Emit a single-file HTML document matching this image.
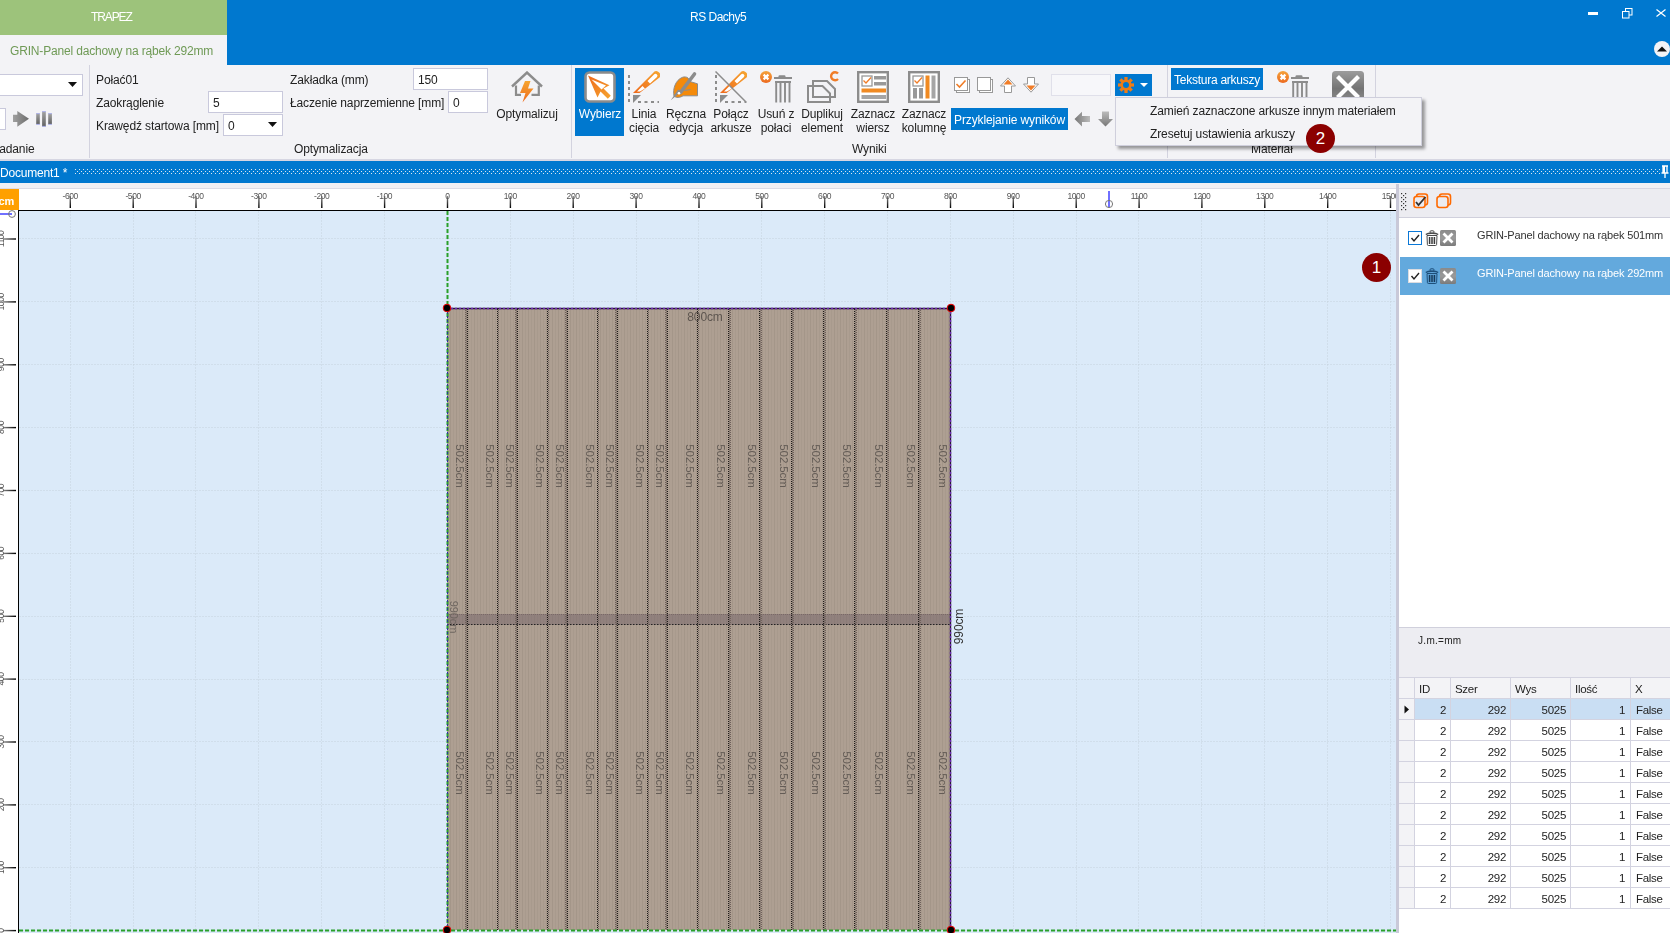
<!DOCTYPE html>
<html><head><meta charset="utf-8">
<style>
*{margin:0;padding:0;box-sizing:border-box}
html,body{width:1670px;height:933px;overflow:hidden;background:#f3f3f6;font-family:"Liberation Sans",sans-serif;font-size:12px;color:#222;letter-spacing:-0.12px}
.a{position:absolute}
.t{position:absolute;white-space:nowrap;line-height:1}
#title{left:0;top:0;width:1670px;height:65px;background:#0078cf}
#tab1{left:0;top:0;width:227px;height:35px;background:#9dc37b}
#tab2{left:0;top:35px;width:227px;height:30px;background:#f3f3f6}
#ribbon{left:0;top:65px;width:1670px;height:94px;background:#f3f3f6}
#rbb{left:0;top:159px;width:1670px;height:2px;background:#d6d6e2}
#doc{left:0;top:161px;width:1670px;height:22px;background:#0078cf}
#gap{left:0;top:183px;width:1670px;height:6px;background:#f0f0f4}
#rulerT{left:19px;top:189px;width:1377px;height:21px;background:#fff}
#rulerL{left:0;top:210px;width:18px;height:723px;background:#fff}
#cm{left:0;top:189px;width:19px;height:21px;background:#ffa000}
#canvas{left:18px;top:210px;width:1378px;height:723px;background:#dbeaf9;border-left:1px solid #000;border-top:2px solid #000;overflow:hidden}
#split{left:1396px;top:183px;width:3px;height:750px;background:#c8c8d6}
.box{background:#fff;border:1px solid #c9c9dc}
.c{transform:translateX(-50%)}
.badge{width:29px;height:29px;border-radius:50%;background:#8b0000;color:#fff;font-size:17px;line-height:29px;text-align:center}
#rp{left:1399px;top:188px;width:271px;height:745px;background:#fff}
.t{will-change:transform}
svg{will-change:transform}
</style></head><body>
<div id="title" class="a"></div>
<div id="tab1" class="a"></div>
<div id="tab2" class="a"></div>
<div class="t" style="left:91px;top:11px;color:#fff;font-size:12px;letter-spacing:-1.1px">TRAPEZ</div>
<div class="t" style="left:10px;top:45px;color:#6f9a56;font-size:12px;letter-spacing:-0.17px">GRIN-Panel dachowy na rąbek 292mm</div>
<div class="t" style="left:690px;top:11px;color:#fff;font-size:12px;letter-spacing:-0.5px">RS Dachy5</div>
<div class="a" style="left:1588px;top:12px;width:10px;height:3px;background:#fff"></div><svg class="a" style="left:1622px;top:8px" width="11" height="11"><rect x="3.5" y="0.5" width="6.5" height="6.5" fill="none" stroke="#fff" stroke-width="1"/><rect x="0.5" y="3.5" width="6.5" height="6.5" fill="#0078cf" stroke="#fff" stroke-width="1"/></svg><svg class="a" style="left:1656px;top:9px" width="10" height="8"><path d="M0.5 0.5L9.5 7.5M9.5 0.5L0.5 7.5" stroke="#fff" stroke-width="1.2"/></svg><div class="a" style="left:1654px;top:41px;width:16px;height:16px;border-radius:50%;background:#f3f3f6"></div><svg class="a" style="left:1656px;top:45px" width="12" height="8"><path d="M1 6.5H11L6 1.5Z" fill="#111"/></svg>
<div id="ribbon" class="a"></div>
<div id="rbb" class="a"></div>
<!-- ribbon content -->
<div class="a" style="left:89px;top:65px;width:1px;height:93px;background:#d3d3df"></div>
<div class="a" style="left:571px;top:65px;width:1px;height:93px;background:#d3d3df"></div>
<div class="a" style="left:1167px;top:65px;width:1px;height:93px;background:#d3d3df"></div>
<div class="a" style="left:1375px;top:65px;width:1px;height:93px;background:#d3d3df"></div>
<!-- Zadanie group -->
<div class="a box" style="left:-2px;top:74px;width:85px;height:22px"></div>
<svg class="a" style="left:68px;top:82px" width="10" height="6"><path d="M0 0H9L4.5 5Z" fill="#111"/></svg>
<div class="a box" style="left:-2px;top:108px;width:8px;height:22px"></div>
<svg class="a" style="left:12px;top:110px" width="18" height="18"><defs><linearGradient id="ga" x1="0" y1="0" x2="1" y2="0"><stop offset="0" stop-color="#a0a0a0"/><stop offset="1" stop-color="#6c6c6c"/></linearGradient></defs><path d="M1 4.8H5.3V1L17 8.8L5.3 16.8V12.1H1Z" fill="url(#ga)"/></svg>
<svg class="a" style="left:35px;top:110px" width="18" height="18"><defs><linearGradient id="gbar" x1="0" y1="0" x2="0" y2="1"><stop offset="0" stop-color="#a4a4a4"/><stop offset="1" stop-color="#626262"/></linearGradient></defs>
<rect x="1.2" y="3.3" width="3.6" height="11" fill="url(#gbar)"/><rect x="7.1" y="1.3" width="3.7" height="15.2" fill="url(#gbar)"/><rect x="13.2" y="3.3" width="3.7" height="11" fill="url(#gbar)"/>
<rect x="1.2" y="3.3" width="3.6" height="0.8" fill="#a8aef8"/><rect x="7.1" y="1.3" width="3.7" height="0.8" fill="#a8aef8"/><rect x="13.2" y="3.3" width="3.7" height="0.8" fill="#a8aef8"/>
<rect x="1.2" y="13.9" width="3.6" height="0.8" fill="#a8aef8"/><rect x="7.1" y="15.9" width="3.7" height="0.8" fill="#a8aef8"/><rect x="13.2" y="13.9" width="3.7" height="0.8" fill="#a8aef8"/></svg>
<div class="t" style="left:-8px;top:143px">Zadanie</div>
<!-- Optymalizacja group -->
<div class="t" style="left:96px;top:74px">Połać01</div>
<div class="t" style="left:96px;top:97px">Zaokrąglenie</div>
<div class="t" style="left:96px;top:120px">Krawędź startowa [mm]</div>
<div class="a box" style="left:208px;top:91px;width:75px;height:22px"></div>
<div class="t" style="left:213px;top:97px">5</div>
<div class="a box" style="left:223px;top:114px;width:60px;height:22px"></div>
<div class="t" style="left:228px;top:120px">0</div>
<svg class="a" style="left:268px;top:122px" width="10" height="6"><path d="M0 0H9L4.5 5Z" fill="#111"/></svg>
<div class="t" style="left:290px;top:74px">Zakładka (mm)</div>
<div class="t" style="left:290px;top:97px">Łaczenie naprzemienne [mm]</div>
<div class="a box" style="left:413px;top:68px;width:75px;height:22px"></div>
<div class="t" style="left:418px;top:74px">150</div>
<div class="a box" style="left:448px;top:91px;width:40px;height:22px"></div>
<div class="t" style="left:453px;top:97px">0</div>
<svg class="a" style="left:511px;top:71px" width="32" height="32"><defs><linearGradient id="gb" x1="0" y1="0" x2="0" y2="1"><stop offset="0" stop-color="#f6a530"/><stop offset="1" stop-color="#ee6a1c"/></linearGradient></defs>
<path d="M1 15.5L16 1.5L31 15.5" fill="none" stroke="#8c8c8c" stroke-width="2.4"/>
<path d="M5 14.5V23.8H10M20.5 23.8H27.8V14.5" fill="none" stroke="#8c8c8c" stroke-width="2.2"/>
<path d="M14 10H19.5L17 17.5H22.5L11.5 31.5L14.5 22H9Z" fill="url(#gb)"/></svg>
<div class="t c" style="left:527px;top:108px">Optymalizuj</div>
<div class="t" style="left:294px;top:143px">Optymalizacja</div>
<!-- Wyniki group -->
<div class="a" style="left:575px;top:68px;width:49px;height:68px;background:#0078cf"></div>
<svg class="a" style="left:584px;top:71px" width="32" height="32"><defs><linearGradient id="gc" x1="0" y1="0" x2="1" y2="1"><stop offset="0" stop-color="#ee6a1c"/><stop offset="1" stop-color="#f6a530"/></linearGradient></defs>
<rect x="1.5" y="1.5" width="29" height="29" rx="4" fill="#fff" stroke="#8c8c8c" stroke-width="2.6"/>
<path d="M4 4.5L25.5 14.2L19.5 17.5L26.8 24.8L23.8 27.8L16.5 20.5L13.5 26.5Z" fill="url(#gc)"/>
<path d="M7.5 8.5L22 14.5L17.5 18.5Z" fill="#fff"/></svg>
<div class="t c" style="left:600px;top:108px;color:#fff">Wybierz</div>
<!-- Linia -->
<svg class="a" style="left:628px;top:71px" width="32" height="32"><defs><linearGradient id="gd" x1="0" y1="1" x2="1" y2="0"><stop offset="0" stop-color="#ee6a1c"/><stop offset="1" stop-color="#f6a530"/></linearGradient></defs>
<path d="M1 4V32" stroke="#8c8c8c" stroke-width="2" stroke-dasharray="3 3"/>
<path d="M10 31H31" stroke="#8c8c8c" stroke-width="2" stroke-dasharray="3 3.5"/>
<path d="M5 24H13L5 32Z" fill="#8c8c8c"/>
<path d="M5 22L25 2A3 3 0 0 1 31.5 6.5L11.5 22Z" fill="url(#gd)"/>
<path d="M9 20.5L14.5 15L17 17.5L12 20.5Z M19.5 10L26 3.6A1.5 1.5 0 0 1 29 6L22 12.5Z" fill="#fff"/></svg>
<div class="t c" style="left:644px;top:108px">Linia</div>
<div class="t c" style="left:644px;top:122px">cięcia</div>
<!-- Reczna -->
<svg class="a" style="left:670px;top:71px" width="32" height="32">
<path d="M4 25C2.5 18 5.5 9 12.5 6.3C14.5 5.6 16.5 5.8 18 7L20 10L21.5 11L27.5 12.8V24.8H13C10 26.8 6 27 4 25Z" fill="#f48a0a" stroke="#8c8c8c" stroke-width="1"/>
<path d="M24.5 3L10.5 21.5" stroke="#8c8c8c" stroke-width="3.6" stroke-linecap="round"/>
<path d="M12 20L0.8 29.2L8 18.5Z" fill="#8c8c8c"/>
<circle cx="9" cy="22.3" r="1.3" fill="#fff"/>
<path d="M14.5 19.5L20.5 18.5" stroke="#8c8c8c" stroke-width="1" fill="none"/></svg>
<div class="t c" style="left:686px;top:108px">Ręczna</div>
<div class="t c" style="left:686px;top:122px">edycja</div>
<!-- Polacz -->
<svg class="a" style="left:715px;top:71px" width="32" height="32">
<path d="M1 4V32" stroke="#8c8c8c" stroke-width="2" stroke-dasharray="3 3"/>
<path d="M10 31H31" stroke="#8c8c8c" stroke-width="2" stroke-dasharray="3 3.5"/>
<path d="M5 24H13L5 32Z" fill="#8c8c8c"/>
<path d="M5 22L25 2A3 3 0 0 1 31.5 6.5L11.5 22Z" fill="url(#gd)"/>
<path d="M9 20.5L14.5 15L17 17.5L12 20.5Z M19.5 10L26 3.6A1.5 1.5 0 0 1 29 6L22 12.5Z" fill="#fff"/>
<path d="M0.5 0.5L31.5 31.5" stroke="#8c8c8c" stroke-width="1.5"/></svg>
<div class="t c" style="left:731px;top:108px">Połącz</div>
<div class="t c" style="left:731px;top:122px">arkusze</div>
<!-- Usun -->
<svg class="a" style="left:760px;top:71px" width="34" height="32">
<defs><linearGradient id="go" x1="0" y1="0" x2="0" y2="1"><stop offset="0" stop-color="#f5a23a"/><stop offset="1" stop-color="#ec6a20"/></linearGradient></defs>
<circle cx="6" cy="6" r="6" fill="url(#go)"/>
<path d="M3.6 3.6L8.4 8.4M8.4 3.6L3.6 8.4" stroke="#fff" stroke-width="2.2"/>
<rect x="14" y="6" width="18" height="2" fill="#8c8c8c"/><rect x="18.5" y="4.2" width="7" height="2.5" rx="1.2" fill="#8c8c8c"/>
<rect x="15" y="10" width="16" height="2" fill="#8c8c8c"/>
<path d="M16.2 12V31.5M20.5 12V31.5M25 12V31.5M29.5 12V31.5" stroke="#8c8c8c" stroke-width="1.9"/></svg>
<div class="t c" style="left:776px;top:108px">Usuń z</div>
<div class="t c" style="left:776px;top:122px">połaci</div>
<!-- Duplikuj -->
<svg class="a" style="left:807px;top:71px" width="34" height="32">
<path d="M6 10H20L28 18V26H6Z" fill="none" stroke="#8c8c8c" stroke-width="2"/>
<path d="M1 15H15.5L23 22.5V31H1Z" fill="none" stroke="#8c8c8c" stroke-width="2"/>
<path d="M31 2.5A4 4 0 1 0 31 8" fill="none" stroke="#f07d28" stroke-width="2.4"/></svg>
<div class="t c" style="left:822px;top:108px">Duplikuj</div>
<div class="t c" style="left:822px;top:122px">element</div>
<!-- Zaznacz wiersz -->
<svg class="a" style="left:857px;top:71px" width="32" height="32">
<rect x="1.2" y="1.2" width="29.6" height="29.6" fill="#fff" stroke="#8c8c8c" stroke-width="2.4"/>
<rect x="5" y="5" width="10" height="10" fill="#fff" stroke="#999" stroke-width="1.3"/>
<path d="M6.5 9.5L9 12L14 6.5" fill="none" stroke="#f07d28" stroke-width="1.3"/>
<rect x="17" y="5" width="12" height="3.5" fill="#999"/><rect x="17" y="11" width="12" height="3.5" fill="#999"/>
<rect x="4.5" y="17.5" width="24.5" height="4" fill="#f08a22"/>
<rect x="4.5" y="24" width="24.5" height="4" fill="#a5a5a5"/></svg>
<div class="t c" style="left:873px;top:108px">Zaznacz</div>
<div class="t c" style="left:873px;top:122px">wiersz</div>
<!-- Zaznacz kolumne -->
<svg class="a" style="left:908px;top:71px" width="32" height="32">
<rect x="1.2" y="1.2" width="29.6" height="29.6" fill="#fff" stroke="#8c8c8c" stroke-width="2.4"/>
<rect x="5" y="5" width="10" height="10" fill="#fff" stroke="#999" stroke-width="1.3"/>
<path d="M6.5 9.5L9 12L14 6.5" fill="none" stroke="#f07d28" stroke-width="1.3"/>
<rect x="5" y="17" width="4" height="10.5" fill="#999"/><rect x="11" y="17" width="4" height="10.5" fill="#999"/>
<rect x="17.5" y="4.5" width="4" height="23" fill="#f08a22"/>
<rect x="23.5" y="4.5" width="4" height="23" fill="#a5a5a5"/></svg>
<div class="t c" style="left:924px;top:108px">Zaznacz</div>
<div class="t c" style="left:924px;top:122px">kolumnę</div>
<!-- small icons -->
<svg class="a" style="left:953px;top:76px" width="18" height="18">
<rect x="3.5" y="3.5" width="13" height="13" fill="#fff" stroke="#999" stroke-width="1"/>
<rect x="1.5" y="1.5" width="13" height="13" fill="#fff" stroke="#999" stroke-width="1"/>
<path d="M3.5 8L6.5 11L12.5 4.5" fill="none" stroke="#f07d28" stroke-width="1.6"/></svg>
<svg class="a" style="left:976px;top:76px" width="18" height="18">
<rect x="3.5" y="3.5" width="13" height="13" fill="#fff" stroke="#999" stroke-width="1"/>
<rect x="1.5" y="1.5" width="13" height="13" fill="#fff" stroke="#999" stroke-width="1"/></svg>
<svg class="a" style="left:1000px;top:77px" width="17" height="16">
<path d="M8 0.8L15.5 9H11.5V15.5H4.5V9H0.5Z" fill="#fff" stroke="#999" stroke-width="1"/>
<path d="M8 2.5L12.5 7.5H3.5Z" fill="#f07d28"/></svg>
<svg class="a" style="left:1023px;top:77px" width="17" height="16">
<path d="M8 15.2L15.5 7H11.5V0.5H4.5V7H0.5Z" fill="#fff" stroke="#999" stroke-width="1"/>
<path d="M8 13.5L12.5 8.5H3.5Z" fill="#f07d28"/></svg>
<div class="a" style="left:1051px;top:74px;width:60px;height:22px;background:#f7f7fa;border:1px solid #e0e0ea"></div>
<div class="a" style="left:1115px;top:74px;width:37px;height:22px;background:#0078cf"></div>
<svg class="a" style="left:1117px;top:76px" width="18" height="18">
<g transform="translate(9 9)" fill="#f07d16">
<circle r="5.5"/>
<rect x="-1.6" y="-8" width="3.2" height="16"/><rect x="-8" y="-1.6" width="16" height="3.2"/>
<rect x="-1.6" y="-8" width="3.2" height="16" transform="rotate(45)"/><rect x="-1.6" y="-8" width="3.2" height="16" transform="rotate(-45)"/>
</g><circle cx="9" cy="9" r="3" fill="#0078cf"/></svg>
<svg class="a" style="left:1140px;top:83px" width="10" height="6"><path d="M0 0H8L4 4Z" fill="#fff"/></svg>
<div class="a" style="left:951px;top:108px;width:117px;height:22px;background:#0078cf"></div>
<div class="t" style="left:954px;top:114px;color:#fff">Przyklejanie wyników</div>
<svg class="a" style="left:1074px;top:111px" width="17" height="16"><defs><linearGradient id="ge" x1="0" y1="0" x2="1" y2="0"><stop offset="0" stop-color="#777"/><stop offset="1" stop-color="#bbb"/></linearGradient><linearGradient id="gf" x1="0" y1="0" x2="0" y2="1"><stop offset="0" stop-color="#bbb"/><stop offset="1" stop-color="#777"/></linearGradient></defs><path d="M0.5 8L8 0.8V5H16V11H8V15.5Z" fill="url(#ge)"/></svg>
<svg class="a" style="left:1097px;top:111px" width="17" height="16"><path d="M8.5 15.5L16 8H12V0.5H5V8H1Z" fill="url(#gf)"/></svg>
<div class="t" style="left:852px;top:143px">Wyniki</div>
<!-- Material group -->
<div class="a" style="left:1171px;top:68px;width:92px;height:22px;background:#0078cf"></div>
<div class="t" style="left:1174px;top:74px;color:#fff;letter-spacing:-0.25px">Tekstura arkuszy</div>
<svg class="a" style="left:1277px;top:71px" width="34" height="32">
<defs><linearGradient id="go" x1="0" y1="0" x2="0" y2="1"><stop offset="0" stop-color="#f5a23a"/><stop offset="1" stop-color="#ec6a20"/></linearGradient></defs>
<circle cx="6" cy="6" r="6" fill="url(#go)"/>
<path d="M3.6 3.6L8.4 8.4M8.4 3.6L3.6 8.4" stroke="#fff" stroke-width="2.2"/>
<rect x="14" y="6" width="18" height="2" fill="#8c8c8c"/><rect x="18.5" y="4.2" width="7" height="2.5" rx="1.2" fill="#8c8c8c"/>
<rect x="15" y="10" width="16" height="2" fill="#8c8c8c"/>
<path d="M16.2 12V31.5M20.5 12V31.5M25 12V31.5M29.5 12V31.5" stroke="#8c8c8c" stroke-width="1.9"/></svg>
<svg class="a" style="left:1332px;top:71px" width="32" height="32"><defs><linearGradient id="gg" x1="0" y1="0" x2="0" y2="1"><stop offset="0" stop-color="#9c9c9c"/><stop offset="0.55" stop-color="#747474"/><stop offset="1" stop-color="#8e8e8e"/></linearGradient></defs>
<rect x="0" y="0" width="32" height="32" rx="3.5" fill="url(#gg)"/>
<path d="M5.5 5.5L26.5 26.5M26.5 5.5L5.5 26.5" stroke="#fff" stroke-width="4.2"/></svg>
<div class="t" style="left:1251px;top:143px">Materiał</div>
<!-- dropdown menu -->
<div class="a" style="left:1115px;top:97px;width:307px;height:49px;background:#f3f3f6;border:1px solid #cfcfdc;box-shadow:3px 3px 3px rgba(0,0,0,.38)"></div>
<div class="t" style="left:1150px;top:105px">Zamień zaznaczone arkusze innym materiałem</div>
<div class="t" style="left:1150px;top:128px">Zresetuj ustawienia arkuszy</div>
<div class="a badge" style="left:1306px;top:124px">2</div>

<div id="doc" class="a"></div>
<div class="t" style="left:0;top:167px;color:#fff;font-size:12px;letter-spacing:-0.2px">Document1 *</div><svg class="a" style="left:75px;top:169px" width="1585" height="5"><defs><pattern id="dp" width="4" height="4" patternUnits="userSpaceOnUse"><rect x="0" y="0" width="1" height="1" fill="#dde6f0"/><rect x="2" y="2" width="1" height="1" fill="#dde6f0"/></pattern></defs><rect width="1585" height="5" fill="url(#dp)"/></svg><svg class="a" style="left:1660px;top:165px" width="10" height="14"><path d="M2 1H8M3 1V8M7 1V8M1.5 8H8.5M5 8V13" fill="none" stroke="#fff" stroke-width="1.3"/><rect x="3" y="1" width="2" height="7" fill="#fff"/></svg>
<svg class="a" style="left:0;top:183px" width="1396" height="750" viewBox="0 183 1396 750">
<defs><pattern id="stripe" x="0" y="0" width="6" height="10" patternUnits="userSpaceOnUse"><rect width="6" height="10" fill="#ae9f92"/><rect x="0" width="1" height="10" fill="#a49689"/><rect x="3" width="1" height="10" fill="#a89a8d"/></pattern><linearGradient id="tick" x1="0" y1="0" x2="0" y2="1"><stop offset="0" stop-color="#888"/><stop offset="1" stop-color="#000"/></linearGradient><linearGradient id="tickL" x1="0" y1="0" x2="1" y2="0"><stop offset="0" stop-color="#888"/><stop offset="1" stop-color="#000"/></linearGradient></defs>
<rect x="0" y="183" width="1396" height="5" fill="#f0f0f4"/>
<rect x="0" y="188" width="1396" height="1" fill="#dcdce6"/>
<rect x="19" y="189" width="1377" height="21" fill="#fff"/>
<rect x="0" y="189" width="19" height="21" fill="#ffa000"/>
<text x="-1.5" y="204.8" font-size="11" font-weight="bold" fill="#fff" font-family="Liberation Sans">cm</text>
<rect x="0" y="210" width="18" height="723" fill="#fff"/>
<rect x="19" y="211" width="1377" height="722" fill="#dbeaf9"/>
<rect x="18" y="210" width="1378" height="1" fill="#000"/>
<rect x="18" y="210" width="1" height="723" fill="#000"/>
<path d="M70.5 211V933M133.5 211V933M195.5 211V933M258.5 211V933M321.5 211V933M384.5 211V933M447.5 211V933M510.5 211V933M573.5 211V933M636.5 211V933M698.5 211V933M761.5 211V933M824.5 211V933M887.5 211V933M950.5 211V933M1013.5 211V933M1076.5 211V933M1138.5 211V933M1201.5 211V933M1264.5 211V933M1327.5 211V933M1390.5 211V933M19 930.5H1396M19 867.5H1396M19 804.5H1396M19 741.5H1396M19 679.5H1396M19 616.5H1396M19 553.5H1396M19 490.5H1396M19 427.5H1396M19 364.5H1396M19 301.5H1396M19 238.5H1396" stroke="#c0ccd8" stroke-opacity="0.42" stroke-width="1" stroke-dasharray="2 1" fill="none"/>
<rect x="69.6" y="196" width="1.4" height="12" fill="url(#tick)"/>
<text x="70.2" y="199" font-size="8.5" fill="#555" text-anchor="middle" font-family="Liberation Sans" letter-spacing="-0.4">-600</text>
<rect x="132.5" y="196" width="1.4" height="12" fill="url(#tick)"/>
<text x="133.1" y="199" font-size="8.5" fill="#555" text-anchor="middle" font-family="Liberation Sans" letter-spacing="-0.4">-500</text>
<rect x="195.3" y="196" width="1.4" height="12" fill="url(#tick)"/>
<text x="195.9" y="199" font-size="8.5" fill="#555" text-anchor="middle" font-family="Liberation Sans" letter-spacing="-0.4">-400</text>
<rect x="258.2" y="196" width="1.4" height="12" fill="url(#tick)"/>
<text x="258.8" y="199" font-size="8.5" fill="#555" text-anchor="middle" font-family="Liberation Sans" letter-spacing="-0.4">-300</text>
<rect x="321.1" y="196" width="1.4" height="12" fill="url(#tick)"/>
<text x="321.7" y="199" font-size="8.5" fill="#555" text-anchor="middle" font-family="Liberation Sans" letter-spacing="-0.4">-200</text>
<rect x="383.9" y="196" width="1.4" height="12" fill="url(#tick)"/>
<text x="384.5" y="199" font-size="8.5" fill="#555" text-anchor="middle" font-family="Liberation Sans" letter-spacing="-0.4">-100</text>
<rect x="446.8" y="196" width="1.4" height="12" fill="url(#tick)"/>
<text x="447.4" y="199" font-size="8.5" fill="#555" text-anchor="middle" font-family="Liberation Sans" letter-spacing="-0.4">0</text>
<rect x="509.7" y="196" width="1.4" height="12" fill="url(#tick)"/>
<text x="510.3" y="199" font-size="8.5" fill="#555" text-anchor="middle" font-family="Liberation Sans" letter-spacing="-0.4">100</text>
<rect x="572.5" y="196" width="1.4" height="12" fill="url(#tick)"/>
<text x="573.1" y="199" font-size="8.5" fill="#555" text-anchor="middle" font-family="Liberation Sans" letter-spacing="-0.4">200</text>
<rect x="635.4" y="196" width="1.4" height="12" fill="url(#tick)"/>
<text x="636.0" y="199" font-size="8.5" fill="#555" text-anchor="middle" font-family="Liberation Sans" letter-spacing="-0.4">300</text>
<rect x="698.3" y="196" width="1.4" height="12" fill="url(#tick)"/>
<text x="698.9" y="199" font-size="8.5" fill="#555" text-anchor="middle" font-family="Liberation Sans" letter-spacing="-0.4">400</text>
<rect x="761.1" y="196" width="1.4" height="12" fill="url(#tick)"/>
<text x="761.8" y="199" font-size="8.5" fill="#555" text-anchor="middle" font-family="Liberation Sans" letter-spacing="-0.4">500</text>
<rect x="824.0" y="196" width="1.4" height="12" fill="url(#tick)"/>
<text x="824.6" y="199" font-size="8.5" fill="#555" text-anchor="middle" font-family="Liberation Sans" letter-spacing="-0.4">600</text>
<rect x="886.9" y="196" width="1.4" height="12" fill="url(#tick)"/>
<text x="887.5" y="199" font-size="8.5" fill="#555" text-anchor="middle" font-family="Liberation Sans" letter-spacing="-0.4">700</text>
<rect x="949.8" y="196" width="1.4" height="12" fill="url(#tick)"/>
<text x="950.4" y="199" font-size="8.5" fill="#555" text-anchor="middle" font-family="Liberation Sans" letter-spacing="-0.4">800</text>
<rect x="1012.6" y="196" width="1.4" height="12" fill="url(#tick)"/>
<text x="1013.2" y="199" font-size="8.5" fill="#555" text-anchor="middle" font-family="Liberation Sans" letter-spacing="-0.4">900</text>
<rect x="1075.5" y="196" width="1.4" height="12" fill="url(#tick)"/>
<text x="1076.1" y="199" font-size="8.5" fill="#555" text-anchor="middle" font-family="Liberation Sans" letter-spacing="-0.4">1000</text>
<rect x="1138.4" y="196" width="1.4" height="12" fill="url(#tick)"/>
<text x="1139.0" y="199" font-size="8.5" fill="#555" text-anchor="middle" font-family="Liberation Sans" letter-spacing="-0.4">1100</text>
<rect x="1201.2" y="196" width="1.4" height="12" fill="url(#tick)"/>
<text x="1201.8" y="199" font-size="8.5" fill="#555" text-anchor="middle" font-family="Liberation Sans" letter-spacing="-0.4">1200</text>
<rect x="1264.1" y="196" width="1.4" height="12" fill="url(#tick)"/>
<text x="1264.7" y="199" font-size="8.5" fill="#555" text-anchor="middle" font-family="Liberation Sans" letter-spacing="-0.4">1300</text>
<rect x="1327.0" y="196" width="1.4" height="12" fill="url(#tick)"/>
<text x="1327.6" y="199" font-size="8.5" fill="#555" text-anchor="middle" font-family="Liberation Sans" letter-spacing="-0.4">1400</text>
<rect x="1389.8" y="196" width="1.4" height="12" fill="url(#tick)"/>
<text x="1390.4" y="199" font-size="8.5" fill="#555" text-anchor="middle" font-family="Liberation Sans" letter-spacing="-0.4">1500</text>
<rect x="1108" y="191" width="2" height="16" fill="#7070ff"/><circle cx="1109" cy="204" r="3.6" fill="none" stroke="#777" stroke-width="1"/>
<rect x="3" y="929.9" width="13" height="1.4" fill="url(#tickL)"/>
<text transform="translate(4 930.5) rotate(-90)" font-size="8.5" fill="#555" text-anchor="middle" font-family="Liberation Sans" letter-spacing="-0.4">0</text>
<rect x="3" y="867.0" width="13" height="1.4" fill="url(#tickL)"/>
<text transform="translate(4 867.6) rotate(-90)" font-size="8.5" fill="#555" text-anchor="middle" font-family="Liberation Sans" letter-spacing="-0.4">100</text>
<rect x="3" y="804.2" width="13" height="1.4" fill="url(#tickL)"/>
<text transform="translate(4 804.8) rotate(-90)" font-size="8.5" fill="#555" text-anchor="middle" font-family="Liberation Sans" letter-spacing="-0.4">200</text>
<rect x="3" y="741.3" width="13" height="1.4" fill="url(#tickL)"/>
<text transform="translate(4 741.9) rotate(-90)" font-size="8.5" fill="#555" text-anchor="middle" font-family="Liberation Sans" letter-spacing="-0.4">300</text>
<rect x="3" y="678.4" width="13" height="1.4" fill="url(#tickL)"/>
<text transform="translate(4 679.0) rotate(-90)" font-size="8.5" fill="#555" text-anchor="middle" font-family="Liberation Sans" letter-spacing="-0.4">400</text>
<rect x="3" y="615.6" width="13" height="1.4" fill="url(#tickL)"/>
<text transform="translate(4 616.2) rotate(-90)" font-size="8.5" fill="#555" text-anchor="middle" font-family="Liberation Sans" letter-spacing="-0.4">500</text>
<rect x="3" y="552.7" width="13" height="1.4" fill="url(#tickL)"/>
<text transform="translate(4 553.3) rotate(-90)" font-size="8.5" fill="#555" text-anchor="middle" font-family="Liberation Sans" letter-spacing="-0.4">600</text>
<rect x="3" y="489.8" width="13" height="1.4" fill="url(#tickL)"/>
<text transform="translate(4 490.4) rotate(-90)" font-size="8.5" fill="#555" text-anchor="middle" font-family="Liberation Sans" letter-spacing="-0.4">700</text>
<rect x="3" y="426.9" width="13" height="1.4" fill="url(#tickL)"/>
<text transform="translate(4 427.5) rotate(-90)" font-size="8.5" fill="#555" text-anchor="middle" font-family="Liberation Sans" letter-spacing="-0.4">800</text>
<rect x="3" y="364.1" width="13" height="1.4" fill="url(#tickL)"/>
<text transform="translate(4 364.7) rotate(-90)" font-size="8.5" fill="#555" text-anchor="middle" font-family="Liberation Sans" letter-spacing="-0.4">900</text>
<rect x="3" y="301.2" width="13" height="1.4" fill="url(#tickL)"/>
<text transform="translate(4 301.8) rotate(-90)" font-size="8.5" fill="#555" text-anchor="middle" font-family="Liberation Sans" letter-spacing="-0.4">1000</text>
<rect x="3" y="238.3" width="13" height="1.4" fill="url(#tickL)"/>
<text transform="translate(4 238.9) rotate(-90)" font-size="8.5" fill="#555" text-anchor="middle" font-family="Liberation Sans" letter-spacing="-0.4">1100</text>
<rect x="0" y="213" width="12" height="2" fill="#7070ff"/><circle cx="12" cy="214" r="3.4" fill="none" stroke="#777" stroke-width="1"/>
<rect x="447" y="308" width="504" height="622" fill="url(#stripe)"/>
<rect x="447" y="614" width="504" height="11" fill="#6a5862" fill-opacity="0.42"/>
<path d="M447 624.5H951" stroke="#222" stroke-width="1" stroke-dasharray="1.5 1.5"/>
<path d="M447 614.5H951" stroke="#6a5a58" stroke-width="1" stroke-dasharray="1 1" stroke-opacity="0.6"/>
<path d="M465.5 309V930M498.5 309V930M515.5 309V930M548.5 309V930M565.5 309V930M598.5 309V930M615.5 309V930M648.5 309V930M665.5 309V930M698.5 309V930M730.5 309V930M761.5 309V930M793.5 309V930M825.5 309V930M856.5 309V930M888.5 309V930M920.5 309V930" stroke="#6e605a" stroke-width="1" stroke-dasharray="1 1" stroke-dashoffset="1"/>
<path d="M466.5 309V930M516.5 309V930M566.5 309V930M616.5 309V930M666.5 309V930M729.5 309V930M760.5 309V930M792.5 309V930M824.5 309V930M855.5 309V930M887.5 309V930M919.5 309V930" stroke="#4a403c" stroke-width="1" stroke-opacity="0.35"/>
<path d="M467.5 309V930M497.5 309V930M517.5 309V930M547.5 309V930M567.5 309V930M597.5 309V930M617.5 309V930M647.5 309V930M667.5 309V930M697.5 309V930M728.5 309V930M759.5 309V930M791.5 309V930M823.5 309V930M854.5 309V930M886.5 309V930M918.5 309V930" stroke="#1e1a18" stroke-width="1" stroke-dasharray="1 1"/>
<path d="M447 308.5H951M950.5 308V930" stroke="#2a1838" stroke-width="1.4"/>
<path d="M447 308.5H951M950.5 308V930" stroke="#6a2ab0" stroke-width="1.4" stroke-dasharray="2 2"/>
<path d="M447.5 211V933" stroke="#2aa02a" stroke-width="2" stroke-dasharray="4 2"/>
<path d="M447.5 308V930" stroke="#3030a0" stroke-width="1" stroke-dasharray="2 2"/>
<path d="M19 930.5H1396" stroke="#2aa02a" stroke-width="2" stroke-dasharray="4 2"/>
<circle cx="447" cy="308" r="3.8" fill="#000" stroke="#e00" stroke-width="1"/>
<circle cx="951" cy="308" r="3.8" fill="#000" stroke="#e00" stroke-width="1"/>
<circle cx="447" cy="930" r="3.8" fill="#000" stroke="#e00" stroke-width="1"/>
<circle cx="951" cy="930" r="3.8" fill="#000" stroke="#e00" stroke-width="1"/>
<text x="705" y="321" font-size="12" fill="#5e5650" text-anchor="middle" font-family="Liberation Sans">800cm</text>
<text transform="translate(456.0 466) rotate(90)" font-size="11.5" fill="#645c56" text-anchor="middle" font-family="Liberation Sans" letter-spacing="-0.1">502.5cm</text>
<text transform="translate(456.0 773) rotate(90)" font-size="11.5" fill="#645c56" text-anchor="middle" font-family="Liberation Sans" letter-spacing="-0.1">502.5cm</text>
<text transform="translate(486.0 466) rotate(90)" font-size="11.5" fill="#645c56" text-anchor="middle" font-family="Liberation Sans" letter-spacing="-0.1">502.5cm</text>
<text transform="translate(486.0 773) rotate(90)" font-size="11.5" fill="#645c56" text-anchor="middle" font-family="Liberation Sans" letter-spacing="-0.1">502.5cm</text>
<text transform="translate(506.0 466) rotate(90)" font-size="11.5" fill="#645c56" text-anchor="middle" font-family="Liberation Sans" letter-spacing="-0.1">502.5cm</text>
<text transform="translate(506.0 773) rotate(90)" font-size="11.5" fill="#645c56" text-anchor="middle" font-family="Liberation Sans" letter-spacing="-0.1">502.5cm</text>
<text transform="translate(536.0 466) rotate(90)" font-size="11.5" fill="#645c56" text-anchor="middle" font-family="Liberation Sans" letter-spacing="-0.1">502.5cm</text>
<text transform="translate(536.0 773) rotate(90)" font-size="11.5" fill="#645c56" text-anchor="middle" font-family="Liberation Sans" letter-spacing="-0.1">502.5cm</text>
<text transform="translate(556.0 466) rotate(90)" font-size="11.5" fill="#645c56" text-anchor="middle" font-family="Liberation Sans" letter-spacing="-0.1">502.5cm</text>
<text transform="translate(556.0 773) rotate(90)" font-size="11.5" fill="#645c56" text-anchor="middle" font-family="Liberation Sans" letter-spacing="-0.1">502.5cm</text>
<text transform="translate(586.0 466) rotate(90)" font-size="11.5" fill="#645c56" text-anchor="middle" font-family="Liberation Sans" letter-spacing="-0.1">502.5cm</text>
<text transform="translate(586.0 773) rotate(90)" font-size="11.5" fill="#645c56" text-anchor="middle" font-family="Liberation Sans" letter-spacing="-0.1">502.5cm</text>
<text transform="translate(606.0 466) rotate(90)" font-size="11.5" fill="#645c56" text-anchor="middle" font-family="Liberation Sans" letter-spacing="-0.1">502.5cm</text>
<text transform="translate(606.0 773) rotate(90)" font-size="11.5" fill="#645c56" text-anchor="middle" font-family="Liberation Sans" letter-spacing="-0.1">502.5cm</text>
<text transform="translate(636.0 466) rotate(90)" font-size="11.5" fill="#645c56" text-anchor="middle" font-family="Liberation Sans" letter-spacing="-0.1">502.5cm</text>
<text transform="translate(636.0 773) rotate(90)" font-size="11.5" fill="#645c56" text-anchor="middle" font-family="Liberation Sans" letter-spacing="-0.1">502.5cm</text>
<text transform="translate(656.0 466) rotate(90)" font-size="11.5" fill="#645c56" text-anchor="middle" font-family="Liberation Sans" letter-spacing="-0.1">502.5cm</text>
<text transform="translate(656.0 773) rotate(90)" font-size="11.5" fill="#645c56" text-anchor="middle" font-family="Liberation Sans" letter-spacing="-0.1">502.5cm</text>
<text transform="translate(686.0 466) rotate(90)" font-size="11.5" fill="#645c56" text-anchor="middle" font-family="Liberation Sans" letter-spacing="-0.1">502.5cm</text>
<text transform="translate(686.0 773) rotate(90)" font-size="11.5" fill="#645c56" text-anchor="middle" font-family="Liberation Sans" letter-spacing="-0.1">502.5cm</text>
<text transform="translate(717.0 466) rotate(90)" font-size="11.5" fill="#645c56" text-anchor="middle" font-family="Liberation Sans" letter-spacing="-0.1">502.5cm</text>
<text transform="translate(717.0 773) rotate(90)" font-size="11.5" fill="#645c56" text-anchor="middle" font-family="Liberation Sans" letter-spacing="-0.1">502.5cm</text>
<text transform="translate(748.0 466) rotate(90)" font-size="11.5" fill="#645c56" text-anchor="middle" font-family="Liberation Sans" letter-spacing="-0.1">502.5cm</text>
<text transform="translate(748.0 773) rotate(90)" font-size="11.5" fill="#645c56" text-anchor="middle" font-family="Liberation Sans" letter-spacing="-0.1">502.5cm</text>
<text transform="translate(780.0 466) rotate(90)" font-size="11.5" fill="#645c56" text-anchor="middle" font-family="Liberation Sans" letter-spacing="-0.1">502.5cm</text>
<text transform="translate(780.0 773) rotate(90)" font-size="11.5" fill="#645c56" text-anchor="middle" font-family="Liberation Sans" letter-spacing="-0.1">502.5cm</text>
<text transform="translate(812.0 466) rotate(90)" font-size="11.5" fill="#645c56" text-anchor="middle" font-family="Liberation Sans" letter-spacing="-0.1">502.5cm</text>
<text transform="translate(812.0 773) rotate(90)" font-size="11.5" fill="#645c56" text-anchor="middle" font-family="Liberation Sans" letter-spacing="-0.1">502.5cm</text>
<text transform="translate(843.0 466) rotate(90)" font-size="11.5" fill="#645c56" text-anchor="middle" font-family="Liberation Sans" letter-spacing="-0.1">502.5cm</text>
<text transform="translate(843.0 773) rotate(90)" font-size="11.5" fill="#645c56" text-anchor="middle" font-family="Liberation Sans" letter-spacing="-0.1">502.5cm</text>
<text transform="translate(875.0 466) rotate(90)" font-size="11.5" fill="#645c56" text-anchor="middle" font-family="Liberation Sans" letter-spacing="-0.1">502.5cm</text>
<text transform="translate(875.0 773) rotate(90)" font-size="11.5" fill="#645c56" text-anchor="middle" font-family="Liberation Sans" letter-spacing="-0.1">502.5cm</text>
<text transform="translate(907.0 466) rotate(90)" font-size="11.5" fill="#645c56" text-anchor="middle" font-family="Liberation Sans" letter-spacing="-0.1">502.5cm</text>
<text transform="translate(907.0 773) rotate(90)" font-size="11.5" fill="#645c56" text-anchor="middle" font-family="Liberation Sans" letter-spacing="-0.1">502.5cm</text>
<text transform="translate(938.8 466) rotate(90)" font-size="11.5" fill="#645c56" text-anchor="middle" font-family="Liberation Sans" letter-spacing="-0.1">502.5cm</text>
<text transform="translate(938.8 773) rotate(90)" font-size="11.5" fill="#645c56" text-anchor="middle" font-family="Liberation Sans" letter-spacing="-0.1">502.5cm</text>
<text transform="translate(450 617) rotate(90)" font-size="11" fill="#6e6660" text-anchor="middle" font-family="Liberation Sans">990cm</text>
<text transform="translate(962.5 626.5) rotate(-90)" font-size="12" fill="#333" text-anchor="middle" font-family="Liberation Sans">990cm</text>
</svg>
<div class="a badge" style="left:1362px;top:253px">1</div>
<div class="a" style="left:1396px;top:183px;width:274px;height:5px;background:#f0f0f4"></div>
<div class="a" style="left:1396px;top:184px;width:3px;height:749px;background:#c9c9d8"></div>
<div class="a" style="left:1399px;top:188px;width:271px;height:30px;background:#ececf1;border-top:1px solid #d6d6e2;border-bottom:1px solid #d0d0dc"></div>
<svg class="a" style="left:1400px;top:192px" width="8" height="20"><rect x="1" y="1" width="1.2" height="1.2" fill="#333"/><rect x="5" y="1" width="1.2" height="1.2" fill="#333"/><rect x="3" y="3" width="1.2" height="1.2" fill="#333"/><rect x="1" y="5" width="1.2" height="1.2" fill="#333"/><rect x="5" y="5" width="1.2" height="1.2" fill="#333"/><rect x="3" y="7" width="1.2" height="1.2" fill="#333"/><rect x="1" y="9" width="1.2" height="1.2" fill="#333"/><rect x="5" y="9" width="1.2" height="1.2" fill="#333"/><rect x="3" y="11" width="1.2" height="1.2" fill="#333"/><rect x="1" y="13" width="1.2" height="1.2" fill="#333"/><rect x="5" y="13" width="1.2" height="1.2" fill="#333"/><rect x="3" y="15" width="1.2" height="1.2" fill="#333"/><rect x="1" y="17" width="1.2" height="1.2" fill="#333"/><rect x="5" y="17" width="1.2" height="1.2" fill="#333"/></svg>
<svg class="a" style="left:1413px;top:193px" width="16" height="16"><rect x="3.5" y="1" width="11" height="11" rx="2.5" fill="none" stroke="#ff6a00" stroke-width="1.6"/><rect x="1" y="3.5" width="11" height="11" rx="2.5" fill="#ececf1" stroke="#ff6a00" stroke-width="1.6"/><path d="M3 9L5.5 12L12.5 4" fill="none" stroke="#333" stroke-width="1.8"/></svg>
<svg class="a" style="left:1436px;top:193px" width="16" height="16"><rect x="3.5" y="1" width="11" height="11" rx="2.5" fill="none" stroke="#ff6a00" stroke-width="1.6"/><rect x="1" y="3.5" width="11" height="11" rx="2.5" fill="#ececf1" stroke="#ff6a00" stroke-width="1.6"/></svg>
<div class="a" style="left:1399px;top:218px;width:271px;height:409px;background:#fff"></div>
<div class="a" style="left:1400px;top:257px;width:270px;height:38px;background:#63a9dd"></div>
<div class="a" style="left:1408px;top:231px;width:14px;height:14px;background:#fff;border:1px solid #0a78d7"></div><svg class="a" style="left:1408px;top:231px" width="14" height="14"><path d="M3.5 7L6 10L11 4" fill="none" stroke="#222" stroke-width="1.4"/></svg><svg class="a" style="left:1425px;top:230px" width="14" height="16"><path d="M0.8 4.5C3 2.8 11 2.8 13.2 4.5" fill="none" stroke="#4a4a4a" stroke-width="1.3"/><rect x="5" y="0.8" width="4" height="2.4" rx="1" fill="none" stroke="#4a4a4a" stroke-width="1"/><path d="M2 5.5H12L11.6 14.6Q11.5 15.5 10.6 15.5H3.4Q2.5 15.5 2.4 14.6Z" fill="#fff" stroke="#4a4a4a" stroke-width="1"/><path d="M4.6 7V14M7 7V14M9.4 7V14" stroke="#3a3a3a" stroke-width="1.5"/></svg><svg class="a" style="left:1440px;top:230px" width="16" height="16"><defs><linearGradient id="gx230" x1="0" y1="0" x2="0" y2="1"><stop offset="0" stop-color="#8a8a8a"/><stop offset="0.5" stop-color="#9a9a9a"/><stop offset="1" stop-color="#7a7a7a"/></linearGradient></defs><rect width="16" height="16" rx="1.5" fill="url(#gx230)"/><path d="M3.5 3.5L12.5 12.5M12.5 3.5L3.5 12.5" stroke="#fff" stroke-width="2.8"/></svg>
<div class="a" style="left:1408px;top:269px;width:14px;height:14px;background:#fff;border:1px solid #dcdce0"></div><svg class="a" style="left:1408px;top:269px" width="14" height="14"><path d="M3.5 7L6 10L11 4" fill="none" stroke="#222" stroke-width="1.4"/></svg><svg class="a" style="left:1425px;top:268px" width="14" height="16"><path d="M0.8 4.5C3 2.8 11 2.8 13.2 4.5" fill="none" stroke="#1d4f7a" stroke-width="1.3"/><rect x="5" y="0.8" width="4" height="2.4" rx="1" fill="none" stroke="#1d4f7a" stroke-width="1"/><path d="M2 5.5H12L11.6 14.6Q11.5 15.5 10.6 15.5H3.4Q2.5 15.5 2.4 14.6Z" fill="#5b9fd3" stroke="#1d4f7a" stroke-width="1"/><path d="M4.6 7V14M7 7V14M9.4 7V14" stroke="#163a5a" stroke-width="1.5"/></svg><svg class="a" style="left:1440px;top:268px" width="16" height="16"><defs><linearGradient id="gx268" x1="0" y1="0" x2="0" y2="1"><stop offset="0" stop-color="#8a8a8a"/><stop offset="0.5" stop-color="#9a9a9a"/><stop offset="1" stop-color="#7a7a7a"/></linearGradient></defs><rect width="16" height="16" rx="1.5" fill="url(#gx268)"/><path d="M3.5 3.5L12.5 12.5M12.5 3.5L3.5 12.5" stroke="#fff" stroke-width="2.8"/></svg>
<div class="t" style="left:1477px;top:230px;font-size:11px;letter-spacing:-0.16px;color:#333">GRIN-Panel dachowy na rąbek 501mm</div>
<div class="t" style="left:1477px;top:268px;font-size:11px;letter-spacing:-0.16px;color:#fff">GRIN-Panel dachowy na rąbek 292mm</div>
<div class="a" style="left:1399px;top:627px;width:271px;height:50px;background:#ededf2;border-top:1px solid #d0d0dc"></div>
<div class="t" style="left:1418px;top:636px;font-size:10px;letter-spacing:0.3px;color:#222">J.m.=mm</div>
<div class="a" style="left:1399px;top:677px;width:271px;height:256px;background:#fff"></div>
<div class="a" style="left:1399px;top:677px;width:271px;height:21px;background:#f3f3f6"></div>
<div class="a" style="left:1399px;top:698px;width:15px;height:210px;background:#f3f3f6"></div>
<div class="a" style="left:1414px;top:698px;width:256px;height:21px;background:#c9def3"></div>
<div class="a" style="left:1399px;top:677px;width:271px;height:1px;background:#d3d3e0"></div>
<div class="a" style="left:1399px;top:698px;width:271px;height:1px;background:#d3d3e0"></div>
<div class="a" style="left:1399px;top:719px;width:271px;height:1px;background:#d3d3e0"></div>
<div class="a" style="left:1399px;top:740px;width:271px;height:1px;background:#d3d3e0"></div>
<div class="a" style="left:1399px;top:761px;width:271px;height:1px;background:#d3d3e0"></div>
<div class="a" style="left:1399px;top:782px;width:271px;height:1px;background:#d3d3e0"></div>
<div class="a" style="left:1399px;top:803px;width:271px;height:1px;background:#d3d3e0"></div>
<div class="a" style="left:1399px;top:824px;width:271px;height:1px;background:#d3d3e0"></div>
<div class="a" style="left:1399px;top:845px;width:271px;height:1px;background:#d3d3e0"></div>
<div class="a" style="left:1399px;top:866px;width:271px;height:1px;background:#d3d3e0"></div>
<div class="a" style="left:1399px;top:887px;width:271px;height:1px;background:#d3d3e0"></div>
<div class="a" style="left:1399px;top:908px;width:271px;height:1px;background:#d3d3e0"></div>
<div class="a" style="left:1414px;top:677px;width:1px;height:232px;background:#d3d3e0"></div>
<div class="a" style="left:1450px;top:677px;width:1px;height:232px;background:#d3d3e0"></div>
<div class="a" style="left:1510px;top:677px;width:1px;height:232px;background:#d3d3e0"></div>
<div class="a" style="left:1570px;top:677px;width:1px;height:232px;background:#d3d3e0"></div>
<div class="a" style="left:1630px;top:677px;width:1px;height:232px;background:#d3d3e0"></div>
<div class="t" style="left:1419px;top:684px;font-size:11.5px;letter-spacing:-0.3px;color:#222">ID</div>
<div class="t" style="left:1455px;top:684px;font-size:11.5px;letter-spacing:-0.3px;color:#222">Szer</div>
<div class="t" style="left:1515px;top:684px;font-size:11.5px;letter-spacing:-0.3px;color:#222">Wys</div>
<div class="t" style="left:1575px;top:684px;font-size:11.5px;letter-spacing:-0.3px;color:#222">Ilość</div>
<div class="t" style="left:1635px;top:684px;font-size:11.5px;letter-spacing:-0.3px;color:#222">X</div>
<svg class="a" style="left:1404px;top:705px" width="6" height="9"><path d="M0.5 0.5L5 4.5L0.5 8.5Z" fill="#111"/></svg>
<div class="t" style="left:1414px;top:705px;width:32px;text-align:right;font-size:11.5px;letter-spacing:-0.3px;color:#222">2</div>
<div class="t" style="left:1450px;top:705px;width:56px;text-align:right;font-size:11.5px;letter-spacing:-0.3px;color:#222">292</div>
<div class="t" style="left:1510px;top:705px;width:56px;text-align:right;font-size:11.5px;letter-spacing:-0.3px;color:#222">5025</div>
<div class="t" style="left:1570px;top:705px;width:55px;text-align:right;font-size:11.5px;letter-spacing:-0.3px;color:#222">1</div>
<div class="t" style="left:1636px;top:705px;font-size:11.5px;letter-spacing:-0.3px;color:#222">False</div>
<div class="t" style="left:1414px;top:726px;width:32px;text-align:right;font-size:11.5px;letter-spacing:-0.3px;color:#222">2</div>
<div class="t" style="left:1450px;top:726px;width:56px;text-align:right;font-size:11.5px;letter-spacing:-0.3px;color:#222">292</div>
<div class="t" style="left:1510px;top:726px;width:56px;text-align:right;font-size:11.5px;letter-spacing:-0.3px;color:#222">5025</div>
<div class="t" style="left:1570px;top:726px;width:55px;text-align:right;font-size:11.5px;letter-spacing:-0.3px;color:#222">1</div>
<div class="t" style="left:1636px;top:726px;font-size:11.5px;letter-spacing:-0.3px;color:#222">False</div>
<div class="t" style="left:1414px;top:747px;width:32px;text-align:right;font-size:11.5px;letter-spacing:-0.3px;color:#222">2</div>
<div class="t" style="left:1450px;top:747px;width:56px;text-align:right;font-size:11.5px;letter-spacing:-0.3px;color:#222">292</div>
<div class="t" style="left:1510px;top:747px;width:56px;text-align:right;font-size:11.5px;letter-spacing:-0.3px;color:#222">5025</div>
<div class="t" style="left:1570px;top:747px;width:55px;text-align:right;font-size:11.5px;letter-spacing:-0.3px;color:#222">1</div>
<div class="t" style="left:1636px;top:747px;font-size:11.5px;letter-spacing:-0.3px;color:#222">False</div>
<div class="t" style="left:1414px;top:768px;width:32px;text-align:right;font-size:11.5px;letter-spacing:-0.3px;color:#222">2</div>
<div class="t" style="left:1450px;top:768px;width:56px;text-align:right;font-size:11.5px;letter-spacing:-0.3px;color:#222">292</div>
<div class="t" style="left:1510px;top:768px;width:56px;text-align:right;font-size:11.5px;letter-spacing:-0.3px;color:#222">5025</div>
<div class="t" style="left:1570px;top:768px;width:55px;text-align:right;font-size:11.5px;letter-spacing:-0.3px;color:#222">1</div>
<div class="t" style="left:1636px;top:768px;font-size:11.5px;letter-spacing:-0.3px;color:#222">False</div>
<div class="t" style="left:1414px;top:789px;width:32px;text-align:right;font-size:11.5px;letter-spacing:-0.3px;color:#222">2</div>
<div class="t" style="left:1450px;top:789px;width:56px;text-align:right;font-size:11.5px;letter-spacing:-0.3px;color:#222">292</div>
<div class="t" style="left:1510px;top:789px;width:56px;text-align:right;font-size:11.5px;letter-spacing:-0.3px;color:#222">5025</div>
<div class="t" style="left:1570px;top:789px;width:55px;text-align:right;font-size:11.5px;letter-spacing:-0.3px;color:#222">1</div>
<div class="t" style="left:1636px;top:789px;font-size:11.5px;letter-spacing:-0.3px;color:#222">False</div>
<div class="t" style="left:1414px;top:810px;width:32px;text-align:right;font-size:11.5px;letter-spacing:-0.3px;color:#222">2</div>
<div class="t" style="left:1450px;top:810px;width:56px;text-align:right;font-size:11.5px;letter-spacing:-0.3px;color:#222">292</div>
<div class="t" style="left:1510px;top:810px;width:56px;text-align:right;font-size:11.5px;letter-spacing:-0.3px;color:#222">5025</div>
<div class="t" style="left:1570px;top:810px;width:55px;text-align:right;font-size:11.5px;letter-spacing:-0.3px;color:#222">1</div>
<div class="t" style="left:1636px;top:810px;font-size:11.5px;letter-spacing:-0.3px;color:#222">False</div>
<div class="t" style="left:1414px;top:831px;width:32px;text-align:right;font-size:11.5px;letter-spacing:-0.3px;color:#222">2</div>
<div class="t" style="left:1450px;top:831px;width:56px;text-align:right;font-size:11.5px;letter-spacing:-0.3px;color:#222">292</div>
<div class="t" style="left:1510px;top:831px;width:56px;text-align:right;font-size:11.5px;letter-spacing:-0.3px;color:#222">5025</div>
<div class="t" style="left:1570px;top:831px;width:55px;text-align:right;font-size:11.5px;letter-spacing:-0.3px;color:#222">1</div>
<div class="t" style="left:1636px;top:831px;font-size:11.5px;letter-spacing:-0.3px;color:#222">False</div>
<div class="t" style="left:1414px;top:852px;width:32px;text-align:right;font-size:11.5px;letter-spacing:-0.3px;color:#222">2</div>
<div class="t" style="left:1450px;top:852px;width:56px;text-align:right;font-size:11.5px;letter-spacing:-0.3px;color:#222">292</div>
<div class="t" style="left:1510px;top:852px;width:56px;text-align:right;font-size:11.5px;letter-spacing:-0.3px;color:#222">5025</div>
<div class="t" style="left:1570px;top:852px;width:55px;text-align:right;font-size:11.5px;letter-spacing:-0.3px;color:#222">1</div>
<div class="t" style="left:1636px;top:852px;font-size:11.5px;letter-spacing:-0.3px;color:#222">False</div>
<div class="t" style="left:1414px;top:873px;width:32px;text-align:right;font-size:11.5px;letter-spacing:-0.3px;color:#222">2</div>
<div class="t" style="left:1450px;top:873px;width:56px;text-align:right;font-size:11.5px;letter-spacing:-0.3px;color:#222">292</div>
<div class="t" style="left:1510px;top:873px;width:56px;text-align:right;font-size:11.5px;letter-spacing:-0.3px;color:#222">5025</div>
<div class="t" style="left:1570px;top:873px;width:55px;text-align:right;font-size:11.5px;letter-spacing:-0.3px;color:#222">1</div>
<div class="t" style="left:1636px;top:873px;font-size:11.5px;letter-spacing:-0.3px;color:#222">False</div>
<div class="t" style="left:1414px;top:894px;width:32px;text-align:right;font-size:11.5px;letter-spacing:-0.3px;color:#222">2</div>
<div class="t" style="left:1450px;top:894px;width:56px;text-align:right;font-size:11.5px;letter-spacing:-0.3px;color:#222">292</div>
<div class="t" style="left:1510px;top:894px;width:56px;text-align:right;font-size:11.5px;letter-spacing:-0.3px;color:#222">5025</div>
<div class="t" style="left:1570px;top:894px;width:55px;text-align:right;font-size:11.5px;letter-spacing:-0.3px;color:#222">1</div>
<div class="t" style="left:1636px;top:894px;font-size:11.5px;letter-spacing:-0.3px;color:#222">False</div>
</body></html>
